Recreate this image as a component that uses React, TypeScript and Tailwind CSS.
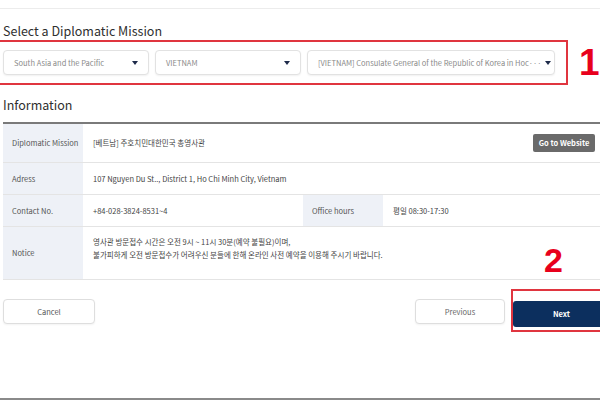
import { ReactNode } from "react";

const FONT = { fontFamily: '"Noto Sans CJK KR", "Noto Sans", sans-serif' };

function Caret() {
  return (
    <svg width="6" height="4" viewBox="0 0 6 4" className="shrink-0">
      <path d="M0 0 L6 0 L3 4 Z" fill="#1e2b4a" />
    </svg>
  );
}

function Select({ width, children }: { width: string; children: ReactNode }) {
  return (
    <div
      className={`${width} flex h-[25px] items-center justify-between gap-[4px] rounded-[4px] border border-[#e2e2e2] bg-white pl-[10px] pr-[10px] shadow-[0_1px_2px_rgba(0,0,0,0.06)]`}
    >
      <span className="whitespace-nowrap text-[7.5px] text-[#8a8a8a]">{children}</span>
      <Caret />
    </div>
  );
}

function Label({ children }: { children: ReactNode }) {
  return (
    <div className="flex w-[80px] shrink-0 items-center bg-[#eef1f7] pl-[9px] text-[7.5px] text-[#555]">
      {children}
    </div>
  );
}

export default function App() {
  return (
    <div style={FONT} className="relative h-[400px] w-[600px] overflow-hidden bg-white text-[#333]">
      <div className="h-[9px] border-b border-[#ececec]" />

      <h2 className="mt-[13px] pl-[3px] text-[12.5px] leading-[18px] text-[#2f2f2f]">Select a Diplomatic Mission</h2>

      <div className="flex items-center">
        <div className="ml-[-3px] flex h-[45px] w-[571px] items-center gap-[6px] border-2 border-[#e0353f] pl-[4px]">
          <Select width="w-[146px]">South Asia and the Pacific</Select>
          <Select width="w-[146px]">VIETNAM</Select>
          <Select width="w-[248px]">[VIETNAM] Consulate General of the Republic of Korea in Hoc···</Select>
        </div>
        <span
          style={{ fontFamily: '"Liberation Sans", Arial, sans-serif' }}
          className="ml-[11px] text-[37px] font-bold leading-none text-[#e8001c]"
        >
          1
        </span>
      </div>

      <h2 className="mt-[11px] pl-[3px] text-[12.5px] leading-[18px] text-[#2f2f2f]">Information</h2>

      <div className="ml-[3px] mt-[8px] w-[597px] border-t-2 border-[#7a7a7a] text-[7.5px]">
        <div className="flex h-[39px] border-b border-[#e4e4e4]">
          <Label>Diplomatic Mission</Label>
          <div className="flex flex-1 items-center justify-between pl-[10px] pr-[5px] text-[#444]">
            <span>[베트남] 주호치민대한민국 총영사관</span>
            <button className="h-[18px] w-[62px] rounded-[2px] bg-[#6a6a6a] text-[7.5px] font-bold text-white">
              Go to Website
            </button>
          </div>
        </div>
        <div className="flex h-[32px] border-b border-[#e4e4e4]">
          <Label>Adress</Label>
          <div className="flex flex-1 items-center pl-[10px] text-[#444]">
            107 Nguyen Du St.., District 1, Ho Chi Minh City, Vietnam
          </div>
        </div>
        <div className="flex h-[32px] border-b border-[#e4e4e4]">
          <Label>Contact No.</Label>
          <div className="flex w-[220px] items-center pl-[10px] text-[#444]">+84-028-3824-8531~4</div>
          <Label>Office hours</Label>
          <div className="flex flex-1 items-center pl-[10px] text-[#444]">평일 08:30-17:30</div>
        </div>
        <div className="flex h-[53px] border-b border-[#e4e4e4]">
          <Label>Notice</Label>
          <div className="flex flex-1 flex-col justify-start pl-[10px] pt-[8px] leading-[13px] text-[#444]">
            <span>영사관 방문접수 시간은 오전 9시 ~ 11시 30분(예약 불필요)이며,</span>
            <span>불가피하게 오전 방문접수가 어려우신 분들에 한해 온라인 사전 예약을 이용해 주시기 바랍니다.</span>
          </div>
        </div>
      </div>

      <div className="mt-[9px] flex items-end">
        <button className="mb-[8px] ml-[3px] h-[25px] w-[92px] rounded-[4px] border border-[#dedede] bg-white text-[7.5px] text-[#555] shadow-[0_1px_2px_rgba(0,0,0,0.05)]">
          Cancel
        </button>
        <button className="mb-[8px] ml-auto h-[25px] w-[90px] rounded-[4px] border border-[#dedede] bg-white text-[7.5px] text-[#666] shadow-[0_1px_2px_rgba(0,0,0,0.05)]">
          Previous
        </button>
        <div className="ml-[6px] mr-[-12px] h-[43px] w-[101px] border-2 border-[#e0353f] pt-[7px]">
          <button className="h-[26px] w-full rounded-[3px] bg-[#0c2f5e] text-[7.5px] font-bold text-white">Next</button>
        </div>
      </div>

      <span
        style={{ fontFamily: '"Liberation Sans", Arial, sans-serif' }}
        className="absolute left-[544px] top-[243px] text-[34px] font-bold leading-none text-[#e8001c]"
      >
        2
      </span>

      <div className="absolute bottom-0 left-0 h-[2px] w-full bg-[#8a8a8a]" />
    </div>
  );
}
